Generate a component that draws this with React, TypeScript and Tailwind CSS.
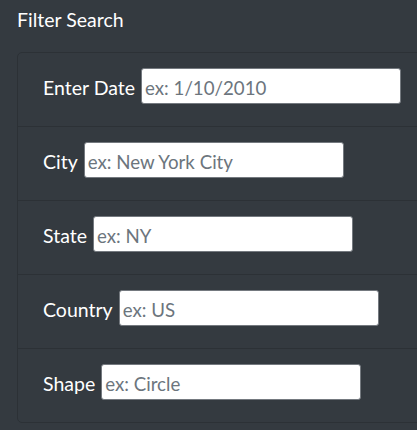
const fields = [
  { label: 'Enter Date', placeholder: 'ex: 1/10/2010' },
  { label: 'City', placeholder: 'ex: New York City' },
  { label: 'State', placeholder: 'ex: NY' },
  { label: 'Country', placeholder: 'ex: US' },
  { label: 'Shape', placeholder: 'ex: Circle' },
];

export default function App() {
  return (
    <div className="w-[417px] h-[430px] overflow-hidden bg-[#343a40] text-white font-['Lato',sans-serif]">
      <h5 className="pl-[17px] pt-[8px] text-[19.5px] leading-[24px] h-[52px]">Filter Search</h5>
      <ul className="ml-[17px] w-[440px] border border-[#2c3136] rounded-[5px]">
        {fields.map((f, i) => (
          <li
            key={f.label}
            className={`flex items-baseline gap-[6px] pl-[25px] pt-[15px] pb-[22px] ${i > 0 ? 'border-t border-[#2c3136]' : ''}`}
          >
            <label className="text-[19.5px]">{f.label}</label>
            <input
              type="text"
              placeholder={f.placeholder}
              className="w-[260px] h-[36px] bg-white border border-[#74797f] rounded-[3px] px-[3px] pt-[3px] text-[18.7px] text-[#495057] placeholder:text-[#6c757d] outline-none"
            />
          </li>
        ))}
      </ul>
    </div>
  );
}
